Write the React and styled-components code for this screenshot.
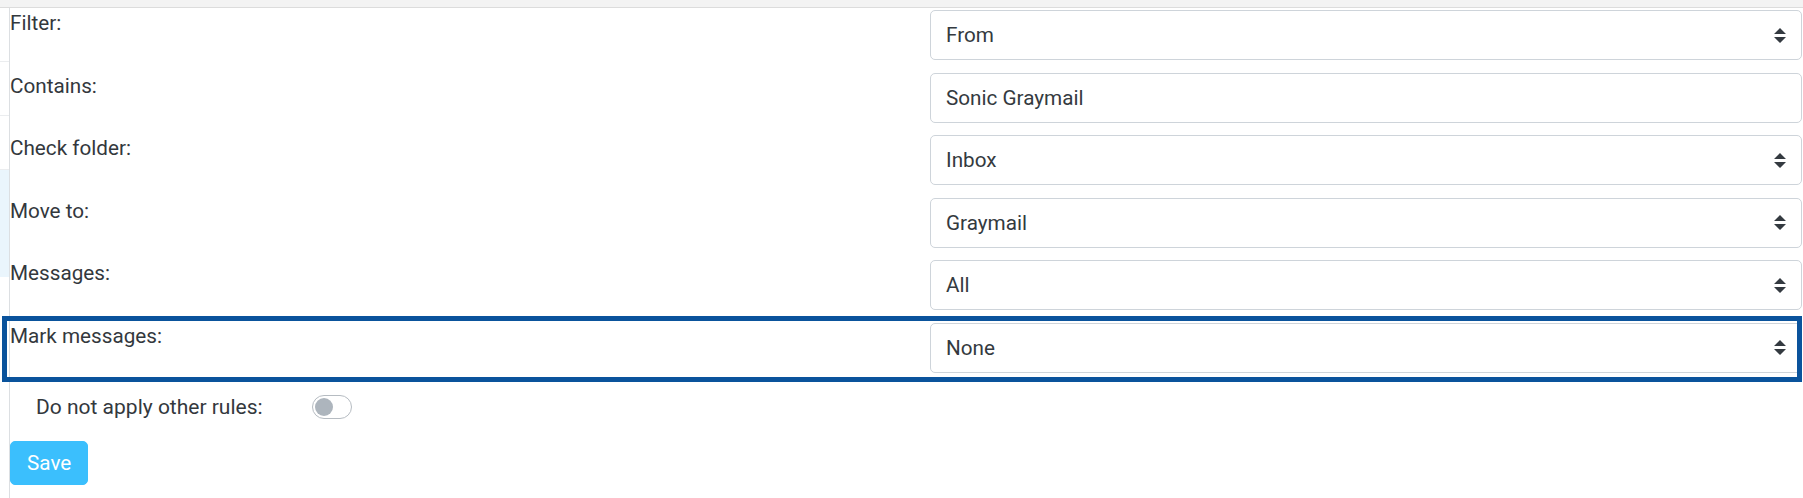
import React, { useState } from "react";
import styled, { createGlobalStyle } from "styled-components";

const GlobalStyle = createGlobalStyle`
  html, body {
    margin: 0;
    padding: 0;
    background: #fff;
  }
  body {
    font-family: Roboto, "Liberation Sans", sans-serif;
    font-size: 20.7px;
    line-height: 30px;
    color: #33383d;
  }
`;

const rows = [
  { label: "Filter:", value: "From", arrow: true },
  { label: "Contains:", value: "Sonic Graymail", arrow: false },
  { label: "Check folder:", value: "Inbox", arrow: true },
  { label: "Move to:", value: "Graymail", arrow: true },
  { label: "Messages:", value: "All", arrow: true },
  { label: "Mark messages:", value: "None", arrow: true, highlight: true },
];

function SortArrow() {
  return (
    <svg width="12" height="15" viewBox="0 0 4 5" aria-hidden="true">
      <path d="M2 0L0 2h4zm0 5L0 3h4z" fill="#343a40" />
    </svg>
  );
}

function App() {
  const [stopRules, setStopRules] = useState(false);

  return (
    <Page>
      <GlobalStyle />
      <TopBar />
      <Body>
        <Sidebar>
          <SideItem />
          <SideItem />
          <SideItem />
          <SideItem $active />
        </Sidebar>

        <Main>
          {rows.map((row) => (
            <Row key={row.label} $highlight={row.highlight}>
              <Label>{row.label}</Label>
              <Field>
                <span>{row.value}</span>
                {row.arrow && <SortArrow />}
              </Field>
            </Row>
          ))}

          <ToggleRow>
            <span>Do not apply other rules:</span>
            <Switch
              type="button"
              $on={stopRules}
              onClick={() => setStopRules(!stopRules)}
            >
              <Knob $on={stopRules} />
            </Switch>
          </ToggleRow>

          <SaveButton type="button">Save</SaveButton>
        </Main>
      </Body>
    </Page>
  );
}

export default App;

const Page = styled.div`
  width: 1803px;
  height: 498px;
  overflow: hidden;
`;

const TopBar = styled.div`
  height: 7px;
  background: #f3f3f3;
  border-bottom: 1px solid #dcdcdc;
`;

const Body = styled.div`
  display: flex;
  height: 490px;
`;

const Sidebar = styled.div`
  width: 9px;
  flex: none;
  border-right: 1px solid #dcdfe2;
  display: flex;
  flex-direction: column;
`;

const SideItem = styled.div`
  height: ${(p) => (p.$active ? "107px" : "53px")};
  background: ${(p) => (p.$active ? "#eaf5fc" : "#fff")};
  border-bottom: ${(p) => (p.$active ? "none" : "1px solid #ebedef")};
  flex: none;
`;

const Main = styled.div`
  flex: 1;
  margin-right: 1px;
  display: flex;
  flex-direction: column;
  align-items: flex-start;
`;

const Row = styled.div`
  position: relative;
  align-self: stretch;
  display: flex;
  align-items: flex-start;
  height: 52px;
  margin-bottom: 10.5px;

  &::after {
    content: "";
    display: ${(p) => (p.$highlight ? "block" : "none")};
    position: absolute;
    left: -8px;
    right: 0;
    top: -4.5px;
    bottom: -9.5px;
    border: 5px solid #0a539c;
    pointer-events: none;
  }
`;

const Label = styled.div`
  width: 920px;
  flex: none;
  line-height: 30px;
`;

const Field = styled.div`
  flex: 1;
  margin-top: 2px;
  height: 50px;
  box-sizing: border-box;
  padding: 9px 15px;
  border: 1px solid #ced4da;
  border-radius: 5px;
  background: #fff;
  color: #343a40;
  display: flex;
  align-items: center;
  justify-content: space-between;

  svg {
    flex: none;
  }
`;

const ToggleRow = styled.div`
  display: flex;
  align-items: center;
  margin-top: 8.5px;
  padding-left: 26px;
  height: 30px;
  gap: 49px;
  font-size: 21px;
`;

const Switch = styled.button`
  position: relative;
  width: 40px;
  height: 24px;
  padding: 0;
  border-radius: 12px;
  border: 1px solid #b6bcc2;
  background: ${(p) => (p.$on ? "#007bff" : "#fff")};
  cursor: pointer;
`;

const Knob = styled.span`
  position: absolute;
  top: 2px;
  left: ${(p) => (p.$on ? "19px" : "2px")};
  width: 18px;
  height: 18px;
  border-radius: 50%;
  background: ${(p) => (p.$on ? "#fff" : "#adb5bd")};
`;

const SaveButton = styled.button`
  margin-top: 19px;
  height: 44px;
  padding: 0 16px;
  border: 1px solid #3bbffd;
  border-radius: 5px;
  background: #3bbffd;
  color: #fff;
  font-family: Roboto, "Liberation Sans", sans-serif;
  font-size: 20.7px;
  line-height: 30px;
  cursor: pointer;
`;
